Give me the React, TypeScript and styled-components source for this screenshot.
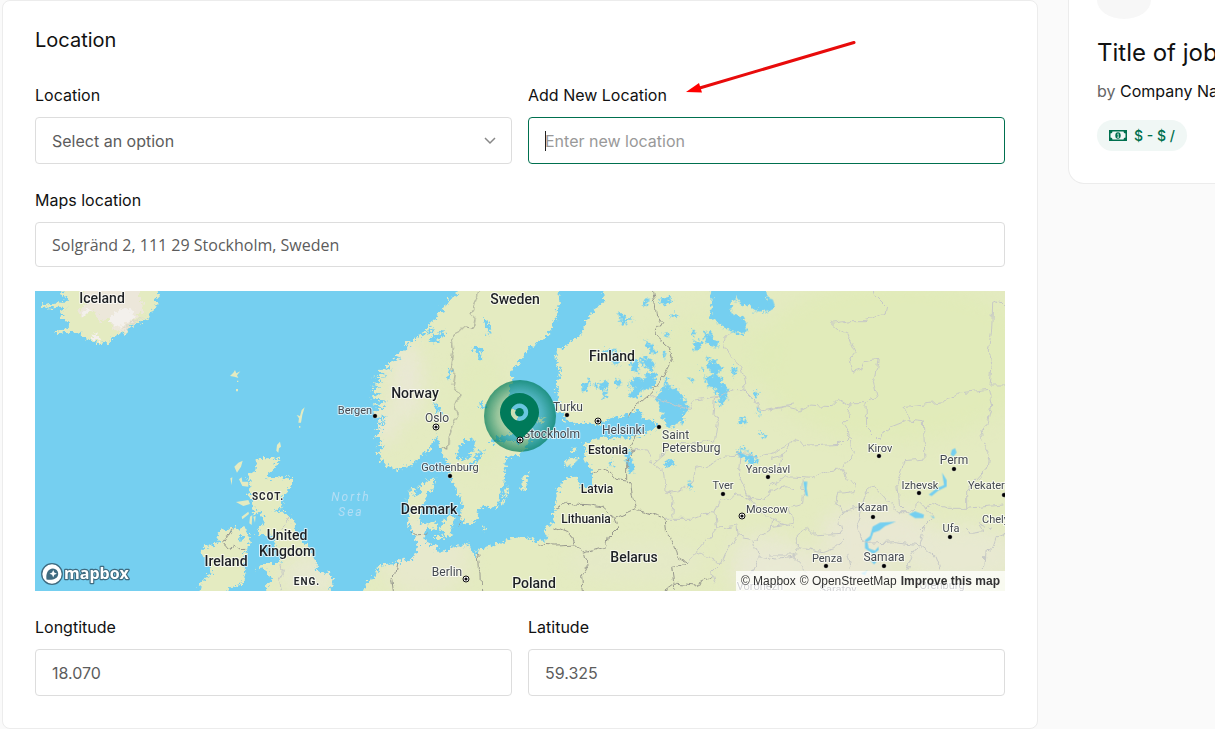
import React from "react";
import styled, { createGlobalStyle } from "styled-components";

const GlobalStyle = createGlobalStyle`
  *, *::before, *::after { box-sizing: border-box; }
  body {
    margin: 0;
    background: #fafafa;
    color: #111;
    font-family: Inter, "Liberation Sans", sans-serif;
    font-size: 16px;
    line-height: 24px;
  }
`;

const Page = styled.div`
  display: grid;
  grid-template-columns: minmax(0, 1fr) 147px;
  gap: 30px;
  align-items: start;
  padding-left: 2px;
`;

const Card = styled.section`
  background: #fff;
  border: 1px solid #ececec;
  border-radius: 8px;
  padding: 24px 32px 32px;
`;

const Heading = styled.h2`
  margin: 0 0 28px;
  font-size: 20px;
  line-height: 30px;
  font-weight: 400;
`;

const Form = styled.form`
  display: grid;
  grid-template-columns: repeat(2, minmax(0, 1fr));
  gap: 24px 16px;
`;

const Field = styled.div<{ $wide?: boolean }>`
  position: relative;
  display: flex;
  flex-direction: column;
  gap: 10px;
  grid-column: ${(p) => (p.$wide ? "1 / -1" : "auto")};
`;

const Label = styled.label`
  align-self: flex-start;
`;

const Control = styled.div<{ $caret?: boolean }>`
  position: relative;
  display: flex;
  &::after {
    content: "";
    display: ${(p) => (p.$caret ? "block" : "none")};
    position: absolute;
    left: 17px;
    top: 14px;
    width: 1px;
    height: 20px;
    background: #222;
  }
`;

const controlStyle = `
  width: 100%;
  padding: 0 16px;
  background: #fff;
  color: #5c5c5c;
  border-radius: 4px;
  outline: none;
  font-size: 16px;
`;

const Input = styled.input<{ $active?: boolean; $open?: boolean }>`
  ${controlStyle}
  height: ${(p) => (p.$open ? 45 : 47)}px;
  border: 1px solid ${(p) => (p.$active ? "#00704f" : "#ddd")};
  font-family: ${(p) => (p.$open ? '"Open Sans", sans-serif' : "Inter, sans-serif")};
  &::placeholder { color: #999; opacity: 1; }
`;

const Select = styled.select`
  ${controlStyle}
  height: 47px;
  border: 1px solid #ddd;
  font-family: Inter, sans-serif;
  appearance: none;
`;

const Chevron = styled.svg`
  position: absolute;
  right: 16px;
  top: 18px;
  pointer-events: none;
`;

const Arrow = styled.svg`
  position: absolute;
  left: 158px;
  top: -43px;
  pointer-events: none;
`;

const MapBox = styled.div`
  position: relative;
  grid-column: 1 / -1;
  height: 300px;
  overflow: hidden;
  background: #75cff0;
`;

const MapSvg = styled.svg`
  display: block;
  width: 100%;
  height: 100%;
  font-family: Roboto, sans-serif;
`;

const MapLogo = styled.a`
  position: absolute;
  left: 5px;
  bottom: 4px;
  display: block;
  height: 25px;
`;

const Attribution = styled.div`
  position: absolute;
  right: 0;
  bottom: 0;
  display: flex;
  gap: 4px;
  padding: 0 5px;
  background: rgba(255, 255, 255, 0.75);
  font-family: "Liberation Sans", Arial, sans-serif;
  font-size: 12px;
  line-height: 20px;
  white-space: nowrap;
`;

const AttributionLink = styled.a<{ $bold?: boolean }>`
  color: #333;
  text-decoration: none;
  font-weight: ${(p) => (p.$bold ? 700 : 400)};
`;

const Aside = styled.aside`
  overflow: hidden;
`;

const JobCard = styled.div`
  width: 340px;
  padding: 0 28px 32px;
  background: #fff;
  border: 1px solid #ececec;
  border-top: 0;
  border-radius: 0 0 16px 16px;
`;

const JobLogo = styled.div`
  width: 54px;
  height: 19px;
  background: #f7f7f7;
  border-radius: 0 0 27px 27px / 0 0 19px 19px;
`;

const JobTitle = styled.h3`
  margin: 18px 0 10px;
  font-size: 24px;
  line-height: 32px;
  font-weight: 400;
`;

const Company = styled.p`
  margin: 0 0 17px;
  color: #666;
`;

const CompanyLink = styled.a`
  color: #111;
  text-decoration: none;
`;

const Salary = styled.span`
  display: inline-flex;
  align-items: center;
  gap: 7px;
  height: 31px;
  padding: 0 12px;
  border-radius: 16px;
  background: #f0f7f5;
  color: #00704f;
  font-size: 14px;
  font-weight: 500;
  vertical-align: top;
`;

/* Geography is drawn in tiles at three units per map pixel. */
const tile = (x: number) => `scale(0.333333) translate(${x} -3)`;
const WEST = tile(0);
const NORDIC = tile(900);
const BALTIC = tile(1560);
const EAST = tile(2205);

const LAND = "#e4ebc1";
const WATER = "#75cff0";

const MAINLAND =
  "M145,3 148,40 130,45 110,70 95,95 85,110 78,135 50,150 30,175 5,180 5,215 15,250 5,290 8,320 14,345 0,362 28,372 25,390 60,400 90,398 110,405 135,400 170,385 215,375 258,360 260,385 285,390 300,395 312,410 290,420 270,432 240,440 200,445 150,440 110,450 85,460 95,480 85,500 90,520 110,530 112,590 80,590 65,560 40,562 20,580 5,610 0,650 -5,700 -25,710 -30,730 -20,745 -50,755 -90,740 -130,745 -180,765 -230,780 -235,800 -245,790 -250,775 -270,765 -295,770 -315,775 -330,785 -360,785 -355,770 -385,755 -390,735 -385,705 -405,700 -410,680 -400,650 -385,635 -390,610 -368,600 -362,565 -380,570 -410,590 -435,600 -445,630 -435,660 -440,690 -430,725 -420,740 -410,780 -420,800 -445,815 -450,805 -480,820 -505,822 -530,830 -540,860 -565,875 -585,925 1400,925 1400,-20 145,-20Z";

const SCANDINAVIA =
  "M372,-20 368,3 360,20 335,28 345,40 320,50 325,62 305,72 310,85 285,95 290,108 270,118 275,130 245,138 250,150 230,150 205,165 228,168 200,185 175,200 195,208 165,215 150,230 175,238 130,240 155,255 115,260 145,272 110,285 140,290 108,300 138,312 105,325 160,332 108,345 150,352 112,365 118,385 160,376 125,400 155,395 118,418 145,420 120,440 140,450 128,470 150,465 130,490 140,515 160,530 195,538 230,525 265,490 285,480 290,462 300,450 305,435 312,460 318,480 330,500 340,530 345,560 355,575 365,600 375,625 385,650 375,680 385,700 420,698 430,680 425,660 445,653 480,655 490,640 495,610 505,580 508,545 512,525 510,505 540,500 560,485 580,465 590,440 578,420 560,400 540,370 525,335 522,300 532,270 528,240 545,225 560,205 580,175 605,160 640,130 650,120 655,95 670,75 665,60 675,40 670,20 675,-20Z";

const BRITAIN =
  "M665,503 700,505 730,502 728,520 705,545 695,568 730,562 775,562 772,585 750,610 735,640 745,645 740,655 715,665 745,665 770,685 780,710 785,740 815,765 828,790 845,820 845,845 870,847 893,855 893,875 880,925 695,925 693,890 710,870 700,850 690,835 665,838 680,822 735,822 740,800 720,790 725,760 715,745 720,725 700,735 670,735 670,715 690,700 680,675 670,665 655,670 650,650 655,630 640,610 650,590 640,570 645,550 660,545 665,520Z";

const IRELAND =
  "M485,925 500,875 525,860 510,855 535,845 520,825 505,800 500,785 505,768 540,765 555,750 545,735 560,718 580,722 595,710 610,720 630,712 640,735 645,750 635,775 628,800 630,830 628,860 620,885 590,890 560,925Z";

const ICELAND =
  "M85,-20 85,3 75,15 100,22 98,30 75,40 50,42 22,46 22,54 50,52 80,50 95,55 75,62 90,75 75,78 88,90 105,95 100,112 85,120 66,120 68,129 110,125 135,130 150,148 175,155 195,162 220,158 232,140 270,130 290,108 335,90 355,60 365,45 358,30 372,15 368,-20Z";

const WEST_ISLES =
  "M585,258 595,248 600,240 604,250 616,244 606,256 610,264 598,260Z M603,297h6v7h-6Z M606,272h4v4h-4Z M785,375 795,378 800,360 809,352 802,375 798,398 790,398 792,385Z M792,408h4v5h-4Z M726,465 735,455 738,470 732,475 730,488 724,482Z M598,530 610,518 623,512 618,530 606,548Z M586,565 592,562 590,586Z M612,568 620,562 622,575 640,575 640,590 622,588Z M603,636 640,630 645,642 625,648Z M620,680 640,665 642,672 622,688Z M645,680 652,675 650,705 643,700Z M655,680 662,678 660,698Z";

const NORDIC_ISLES =
  "M318,702 335,690 340,680 362,685 355,700 345,715 350,735 330,742 315,720Z M275,700 290,692 305,700 300,718 285,722Z M300,738 330,738 325,750 300,748Z M442,712 452,714 450,724 443,722Z M385,758 400,754 402,766 388,768Z M558,600 566,560 580,548 578,575 566,603Z M498,645 510,600 520,585 518,600 503,648Z M602,395 612,382 630,390 620,402Z M690,518 700,505 728,503 722,520 692,528Z M706,480 718,475 722,488 708,490Z";

const SWEDEN_LAKES =
  "M365,490 375,465 390,450 418,448 420,470 412,490 398,505 380,510 365,505Z M395,535 415,510 430,485 450,480 432,510 400,540Z M445,88 455,88 462,110 470,130 462,135 455,115Z M415,170 428,168 440,180 438,208 430,208 430,188 415,182Z M342,235 350,240 346,270 336,265Z M295,335 310,345 322,370 315,375 300,355Z M432,335 452,348 450,355 435,352Z M465,452 500,436 530,432 565,442 560,458 520,452 490,456 470,460Z M280,152 300,138 330,120 328,130 300,160Z M276,125 300,115 300,122 280,135Z M555,300 560,290 562,330 556,325Z";

const FINLAND_LAKES =
  "M190,70 205,72 208,82 235,85 215,98 200,105Z M262,40 275,28 285,25 280,42 268,48Z M312,28 345,20 358,32 340,38 322,44Z M345,76 365,70 375,78 352,84Z M326,128 340,126 342,140 328,142Z M268,150 290,160 305,190 300,195 280,175Z M322,185 334,192 330,205 320,196Z M168,205 190,205 192,222 175,222Z M135,180 165,182 195,184 190,190 140,190Z M82,285 100,268 105,275 92,305 84,305Z M110,285 128,275 130,290 112,290Z M135,280 155,270 158,290 150,298 158,320 145,325 140,300Z M178,270 195,265 198,285 185,288Z M222,215 240,212 260,222 245,232 255,250 235,245Z M250,200 285,205 298,220 295,240 275,232 262,222Z M215,290 230,270 245,262 265,265 280,250 300,248 306,275 285,295 262,300 250,320 228,328 222,310 240,290Z M328,260 340,268 338,285 326,280Z M400,265 418,268 412,278Z M415,155 440,150 438,180 420,182Z M445,130 460,125 475,140 490,165 480,172 455,160Z M408,125 422,122 424,135 410,136Z M530,232 545,232 540,255 530,250Z M435,230 448,235 445,245Z M300,322 318,300 328,283 350,290 365,300 390,330 402,360 385,370 385,395 350,412 335,410 320,375 310,340Z M455,200 480,215 502,235 490,250 505,280 520,300 515,330 500,345 485,340 495,325 480,300 455,285 448,260 475,255 460,235Z M455,-20 470,20 468,60 465,85 490,100 520,120 545,130 565,130 578,120 570,90 555,80 530,70 525,40 545,25 560,50 580,40 600,65 620,60 630,70 655,50 640,30 630,-20Z M595,310 608,302 606,325 596,324Z M550,390 562,382 576,392 572,404 552,404Z M608,352 618,360 612,380Z M610,418 635,440 632,446 612,426Z M332,515 350,508 362,520 345,532 330,528Z M398,575 412,580 414,600 402,590Z M545,485 568,470 585,490 605,500 605,520 590,525 570,508 555,500Z M205,478 222,480 232,500 238,545 225,548 215,520Z M165,512h7v18h-9Z M540,495 555,488 560,498Z";

const EAST_LAKES =
  "M-5,25 8,28 14,45 5,58 -10,62Z M100,575 112,575 110,595 114,620 106,615Z M545,480 555,474 560,488 550,500 542,494Z M516,548 530,570 530,590 505,602 485,618 476,614 500,595 522,585Z M416,672 435,664 462,674 460,684 435,684Z M308,710 330,698 378,695 345,708 328,722 310,728 302,750 292,755 296,775 315,782 325,770 326,780 310,792 285,775 285,750 300,738Z M300,810 320,815 312,823Z M272,850 292,842 285,856Z M480,676 495,682 490,685Z";

const COUNTRY_BORDERS = [
  { at: NORDIC, d: "M435,-10 428,20 405,70 420,85 415,115 385,110 360,135 350,150 355,180 348,215 358,250 352,285 375,315 362,345 368,380 355,410 340,440 338,478 325,470 312,478" },
  { at: NORDIC, d: "M225,722 235,735 278,732" },
  { at: NORDIC, d: "M425,785 430,835 438,855 440,903" },
  { at: NORDIC, d: "M186,820 180,850 170,865 175,903" },
  { at: NORDIC, d: "M370,672 380,690 372,708" },
  { at: BALTIC, d: "M290,-10 300,45 305,80 320,100 300,135 345,175 355,205 335,245 290,310 240,350 220,385" },
  { at: BALTIC, d: "M240,440 225,465 235,478 215,520 215,572 228,590 232,620 242,655" },
  { at: BALTIC, d: "M110,550 135,535 165,545 180,565 215,570" },
  { at: BALTIC, d: "M0,655 35,640 110,645 140,650 180,685 242,657 270,665 330,685 335,730 360,770 368,800 395,815" },
  { at: BALTIC, d: "M180,685 190,710 160,740 155,770 120,780 85,790 65,762 0,765 -50,762" },
  { at: BALTIC, d: "M-5,708 40,725 58,760 M85,790 95,830 80,860 85,903" },
  { at: BALTIC, d: "M395,815 375,830 350,835 355,870 360,900 M330,905 365,880 420,885 470,860" },
  { at: WEST, d: "M595,712 580,740 565,760 580,778 600,762 615,780 625,778" },
];

const REGION_BORDERS = [
  { at: WEST, d: "M765,680 755,705 740,722 M735,825 745,850 732,875 738,905" },
  { at: BALTIC, d: "M525,130 505,150 520,195 555,225 568,270 570,300 600,330 615,360 720,345" },
  { at: BALTIC, d: "M570,300 535,298 485,320 420,330 402,358 280,318" },
  { at: BALTIC, d: "M485,320 480,370 490,400 482,450 410,462 370,460 330,490 295,520 275,480 232,478" },
  { at: BALTIC, d: "M295,520 325,545 330,600 355,620 350,680 M330,685 410,685 450,670 480,672 490,640 545,612 585,625 550,555 555,500 510,498 470,525 425,535 415,575 375,605 335,610" },
  { at: BALTIC, d: "M545,488 610,500 650,490 690,470 720,450 M585,625 625,630 640,605 690,590 720,600" },
  { at: BALTIC, d: "M480,672 485,715 460,745 430,780 395,815 M485,715 545,705 550,740 595,750 610,800 660,810 720,800 M550,740 515,785 500,820 460,800 425,785" },
  { at: BALTIC, d: "M585,625 610,660 650,690 645,720 600,750 M650,690 720,715 M500,820 470,850 480,880 M610,800 590,850" },
  { at: EAST, d: "M305,-10 315,15 350,50 345,70 310,85 285,92 240,92 185,100 205,118 230,130 255,185 240,205 248,250 275,240 285,215 325,208 310,280 320,320 288,335 245,335 235,345 205,325 180,350 120,345 90,360 45,350 0,360" },
  { at: EAST, d: "M240,340 235,395 215,395 240,435 245,480 255,490 215,535 165,545 130,565 50,560 0,590" },
  { at: EAST, d: "M288,335 290,410 330,450 335,430 365,410 415,390 460,395 465,510 405,515 380,575 385,640 405,660" },
  { at: EAST, d: "M415,390 402,350 440,345 520,335 560,310 655,298 665,345 650,410 628,440 660,490 655,530 590,605 590,655 700,645" },
  { at: EAST, d: "M705,45 690,30 668,40 665,120 655,180 665,240 660,285 705,285" },
  { at: EAST, d: "M0,505 40,495 70,455 120,465 215,460 240,435 M0,555 30,540 35,500 M100,570 95,640 60,650 70,700 0,710" },
  { at: EAST, d: "M215,535 230,570 260,575 255,605 205,610 195,640 220,660 275,650 290,600 310,585 350,630 385,665 420,665 445,635 465,655 490,640 530,655 590,655" },
  { at: EAST, d: "M220,660 205,690 215,730 130,735 110,715 85,730 85,770 160,785 200,770 225,750 M275,660 260,700 270,740 295,760 375,755 450,765 465,705 490,680 465,655" },
  { at: EAST, d: "M450,765 425,800 410,840 M450,765 495,800 510,840 M465,705 450,720 M705,730 680,740 670,770 645,790 640,840 M585,715 605,730 640,725 625,700 660,715" },
  { at: EAST, d: "M85,770 70,800 110,840 M230,790 240,830 M0,795 85,795" },
];

type PlaceKind = "country" | "small" | "city" | "town";
type Place = { x: number; y: number; name: string; kind: PlaceKind; start?: boolean };

const PLACES: Place[] = [
  { x: 67, y: 12, name: "Iceland", kind: "country" },
  { x: 480, y: 13, name: "Sweden", kind: "country" },
  { x: 577, y: 70, name: "Finland", kind: "country" },
  { x: 380, y: 107, name: "Norway", kind: "country" },
  { x: 394, y: 223, name: "Denmark", kind: "country" },
  { x: 252, y: 249, name: "United", kind: "country" },
  { x: 252, y: 265, name: "Kingdom", kind: "country" },
  { x: 191, y: 275, name: "Ireland", kind: "country" },
  { x: 599, y: 271, name: "Belarus", kind: "country" },
  { x: 499, y: 297, name: "Poland", kind: "country" },
  { x: 573, y: 163, name: "Estonia", kind: "small" },
  { x: 562, y: 202, name: "Latvia", kind: "small" },
  { x: 551, y: 232, name: "Lithuania", kind: "small" },
  { x: 320, y: 123, name: "Bergen", kind: "town" },
  { x: 402, y: 131, name: "Oslo", kind: "city" },
  { x: 415, y: 180, name: "Gothenburg", kind: "town" },
  { x: 533, y: 120, name: "Turku", kind: "city" },
  { x: 567, y: 143, name: "Helsinki", kind: "city", start: true },
  { x: 627, y: 148, name: "Saint", kind: "city", start: true },
  { x: 627, y: 161, name: "Petersburg", kind: "city", start: true },
  { x: 412, y: 285, name: "Berlin", kind: "city" },
  { x: 688, y: 198, name: "Tver", kind: "town" },
  { x: 733, y: 182, name: "Yaroslavl", kind: "town" },
  { x: 711, y: 222, name: "Moscow", kind: "town", start: true },
  { x: 845, y: 161, name: "Kirov", kind: "town" },
  { x: 919, y: 173, name: "Perm", kind: "city" },
  { x: 885, y: 198, name: "Izhevsk", kind: "town" },
  { x: 933, y: 198, name: "Yekaterinburg", kind: "town", start: true },
  { x: 838, y: 220, name: "Kazan", kind: "town" },
  { x: 947, y: 232, name: "Chelyabinsk", kind: "town", start: true },
  { x: 916, y: 241, name: "Ufa", kind: "town" },
  { x: 792, y: 271, name: "Penza", kind: "town" },
  { x: 849, y: 270, name: "Samara", kind: "city" },
  { x: 725, y: 299, name: "Voronezh", kind: "town" },
  { x: 803, y: 302, name: "Saratov", kind: "town" },
  { x: 907, y: 298, name: "Orenburg", kind: "town" },
];

const CITY_DOTS = [
  [340, 125], [415, 185], [532, 124], [624, 136], [688, 203], [733, 186], [844, 165],
  [919, 178], [884, 202], [969, 204], [838, 226], [915, 246], [791, 275], [849, 275],
];

const CAPITAL_DOTS = [[401, 136], [563, 130], [431, 288], [707, 225]];

const placeSize: Record<PlaceKind, number> = { country: 14, small: 12, city: 12, town: 11 };
const isTown = (kind: PlaceKind) => kind === "city" || kind === "town";

const PlaceName = styled.text<{ $kind: PlaceKind; $start?: boolean }>`
  font-size: ${(p) => placeSize[p.$kind]}px;
  font-weight: ${(p) => (isTown(p.$kind) ? 400 : 500)};
  fill: ${(p) => (isTown(p.$kind) ? "#444950" : "#1d2024")};
  text-anchor: ${(p) => (p.$start ? "start" : "middle")};
  stroke: rgba(255, 255, 255, 0.7);
  stroke-width: 2px;
  stroke-linejoin: round;
  paint-order: stroke;
`;

const RegionName = styled.text`
  font-size: 10px;
  font-weight: 700;
  letter-spacing: 1px;
  fill: #26292d;
  text-anchor: middle;
  stroke: rgba(255, 255, 255, 0.7);
  stroke-width: 2px;
  paint-order: stroke;
`;

const SeaName = styled.text`
  font-size: 12px;
  font-style: italic;
  letter-spacing: 2px;
  fill: #b4def4;
  text-anchor: middle;
`;

const Capital = ({ x, y }: { x: number; y: number }) => (
  <g>
    <circle cx={x} cy={y} r="3" fill="#fff" stroke="#111" strokeWidth="1" />
    <circle cx={x} cy={y} r="1.6" fill="#111" />
  </g>
);

const WorldMap = () => (
  <MapSvg viewBox="0 0 970 300" preserveAspectRatio="xMidYMid slice" role="img" aria-label="Map of northern Europe">
    <defs>
      <filter id="coast" filterUnits="userSpaceOnUse" x="-10" y="-10" width="990" height="320" colorInterpolationFilters="sRGB">
        <feTurbulence type="fractalNoise" baseFrequency="0.28" numOctaves="3" seed="4" result="n" />
        <feDisplacementMap in="SourceGraphic" in2="n" scale="10" xChannelSelector="R" yChannelSelector="G" />
      </filter>
      <filter id="border" filterUnits="userSpaceOnUse" x="-10" y="-10" width="990" height="320" colorInterpolationFilters="sRGB">
        <feTurbulence type="fractalNoise" baseFrequency="0.12" numOctaves="2" seed="9" result="n" />
        <feDisplacementMap in="SourceGraphic" in2="n" scale="8" xChannelSelector="R" yChannelSelector="G" />
      </filter>
      <filter id="soft" x="-50%" y="-50%" width="200%" height="200%">
        <feGaussianBlur stdDeviation="9" />
      </filter>
      <radialGradient id="halo">
        <stop offset="0.3" stopColor="#007a5a" stopOpacity="0.1" />
        <stop offset="0.65" stopColor="#007a5a" stopOpacity="0.35" />
        <stop offset="1" stopColor="#007a5a" stopOpacity="0.72" />
      </radialGradient>
      <clipPath id="land">
        <path d={MAINLAND} transform={BALTIC} />
        <path d={SCANDINAVIA} transform={NORDIC} />
        <path d={BRITAIN} transform={WEST} />
      </clipPath>
    </defs>
    <rect width="970" height="300" fill={WATER} />
    <g filter="url(#coast)">
      <g fill={LAND}>
        <path d={MAINLAND} transform={BALTIC} />
        <path d={SCANDINAVIA} transform={NORDIC} />
        <path d={NORDIC_ISLES} transform={NORDIC} />
        <path d={BRITAIN} transform={WEST} />
        <path d={IRELAND} transform={WEST} />
        <path d={ICELAND} transform={WEST} />
      </g>
      <g clipPath="url(#land)">
        <g fill="#e9e8d4" filter="url(#soft)">
          <ellipse cx="780" cy="285" rx="85" ry="26" opacity="0.9" />
          <ellipse cx="840" cy="240" rx="55" ry="26" opacity="0.9" />
          <ellipse cx="730" cy="265" rx="35" ry="22" opacity="0.8" />
          <ellipse cx="925" cy="265" rx="60" ry="30" opacity="0.8" />
          <ellipse cx="390" cy="265" rx="45" ry="40" opacity="0.6" />
          <ellipse cx="275" cy="285" rx="28" ry="22" opacity="0.8" />
          <ellipse cx="372" cy="90" rx="15" ry="40" />
          <ellipse cx="352" cy="135" rx="10" ry="18" />
          <ellipse cx="600" cy="270" rx="70" ry="20" opacity="0.3" />
        </g>
        <g fill="#e0ebb8" filter="url(#soft)">
          <ellipse cx="860" cy="70" rx="140" ry="80" opacity="0.8" />
          <ellipse cx="680" cy="60" rx="60" ry="40" opacity="0.5" />
          <ellipse cx="445" cy="120" rx="25" ry="60" opacity="0.5" />
        </g>
      </g>
      <g transform={WEST}>
        <path d="M135,10 160,-10 310,-10 325,60 300,85 265,130 235,120 225,85 190,95 180,60 140,80 130,60 155,45Z" fill="#ece7da" />
        <path d="M225,80 260,55 300,60 290,90 255,110 225,100Z M165,140 180,130 200,145 185,152Z M140,65 155,50 162,65 148,80Z" fill="#f3f0ec" />
        <path d="M255,122 290,95 335,75 300,100Z" fill="#dddacd" />
        <path d="M612,738 625,738 628,752 614,754Z" fill={WATER} />
      </g>
      <g fill={WATER}>
        <path d={SWEDEN_LAKES} transform={NORDIC} />
        <path d={FINLAND_LAKES} transform={BALTIC} />
        <path d="M245,590 258,600 255,620 235,612Z M270,650 285,655 280,670Z" transform={NORDIC} />
      </g>
    </g>
    <g fill={LAND}>
      <path d={WEST_ISLES} transform={WEST} />
      <path d="M530,500 545,496 542,508Z M555,478 572,480 585,492 578,498 562,490Z M30,520 45,505 70,508 60,518 35,528Z" transform={BALTIC} />
    </g>
    <path d={EAST_LAKES} transform={EAST} fill={WATER} />
    <g fill="none" strokeLinejoin="round" filter="url(#border)">
      {REGION_BORDERS.map((b) => (
        <path key={b.d} d={b.d} transform={b.at} stroke="#c6c8c6" strokeWidth="3" />
      ))}
      {COUNTRY_BORDERS.map((b) => (
        <path key={b.d} d={b.d} transform={b.at} stroke="#98998f" strokeWidth="3" />
      ))}
    </g>

    {PLACES.map((p) => (
      <PlaceName key={p.name} x={p.x} y={p.y} $kind={p.kind} $start={p.start}>
        {p.name}
      </PlaceName>
    ))}
    <RegionName x="233" y="209">SCOT.</RegionName>
    <RegionName x="272" y="294">ENG.</RegionName>
    <SeaName x="316" y="210">North</SeaName>
    <SeaName x="316" y="225">Sea</SeaName>
    {CITY_DOTS.map(([x, y]) => (
      <circle key={`${x}-${y}`} cx={x} cy={y} r="2.3" fill="#000" stroke="#fff" strokeOpacity="0.6" strokeWidth="0.6" />
    ))}
    {CAPITAL_DOTS.map(([x, y]) => (
      <Capital key={`${x}-${y}`} x={x} y={y} />
    ))}
    <circle cx="485" cy="125" r="36" fill="url(#halo)" />
    <PlaceName x={488} y={147} $kind="city" $start>
      Stockholm
    </PlaceName>
    <path
      fillRule="evenodd"
      fill="#007a5a"
      d="M485 150C479 142 465 134 465 121.500A19.500 19.500 0 0 1 504 121.500C504 134 491 142 485 150ZM484.500 112.500a8.700 8.700 0 1 0 0.010 0Z"
    />
    <circle cx="484.500" cy="121.200" r="4.300" fill="#007a5a" />
    <Capital x={485} y={149} />
  </MapSvg>
);

const MapboxLogo = () => (
  <svg width="92" height="25" viewBox="0 0 92 25" aria-label="Mapbox">
    <circle cx="12" cy="12" r="10.300" fill="#fff" stroke="#3f6b80" strokeWidth="1.300" />
    <path d="M6.500 17.500C5.500 11.500 8 6.500 13 6.500a5.200 5.200 0 0 1 5.200 5.200C18.200 16.500 12.500 18.500 6.500 17.500Z" fill="#3f6b80" />
    <path d="M13.200 8l1.100 2.600 2.600 1.100-2.600 1.100-1.100 2.600-1.100-2.600-2.600-1.100 2.600-1.100Z" fill="#fff" />
    <text
      x="24"
      y="17"
      fontFamily="Open Sans, sans-serif"
      fontSize="16"
      fontWeight="700"
      fill="#fff"
      stroke="#3f6b80"
      strokeWidth="2.400"
      strokeLinejoin="round"
      paintOrder="stroke"
    >
      mapbox
    </text>
  </svg>
);

const MoneyIcon = () => (
  <svg width="18" height="11" viewBox="0 0 18 11" aria-hidden="true">
    <path
      fillRule="evenodd"
      fill="currentColor"
      d="M0 0H18V11H0ZM3.500 1.500A2 2 0 0 1 1.500 3.500V7.500A2 2 0 0 1 3.500 9.500H14.500A2 2 0 0 1 16.500 7.500V3.500A2 2 0 0 1 14.500 1.500Z"
    />
    <ellipse cx="9" cy="5.500" rx="2.700" ry="3.200" fill="currentColor" />
    <path d="M8.300 4.300L9.200 3.700V7.300M8.200 7.300H10.100" fill="none" stroke="#f0f7f5" strokeWidth="0.800" />
  </svg>
);

export default function App() {
  return (
    <>
      <GlobalStyle />
      <Page>
        <Card>
          <Heading>Location</Heading>
          <Form>
            <Field>
              <Label htmlFor="location">Location</Label>
              <Control>
                <Select id="location" defaultValue="">
                  <option value="">Select an option</option>
                </Select>
                <Chevron width="12" height="12" viewBox="0 0 12 12" aria-hidden="true">
                  <path d="M1 3l5 5 5-5" fill="none" stroke="#888" strokeWidth="1.500" />
                </Chevron>
              </Control>
            </Field>
            <Field>
              <Label htmlFor="new-location">Add New Location</Label>
              <Control $caret>
                <Input id="new-location" type="text" placeholder="Enter new location" $active />
              </Control>
              <Arrow width="172" height="56" viewBox="0 0 172 56" aria-hidden="true">
                <path d="M168 2.500L12 48.500" stroke="#e80b0b" strokeWidth="3" strokeLinecap="round" />
                <path d="M0 52L13 43L16 52.500Z" fill="#f00" />
              </Arrow>
            </Field>
            <Field $wide>
              <Label htmlFor="maps-location">Maps location</Label>
              <Control>
                <Input id="maps-location" type="text" defaultValue="Solgränd 2, 111 29 Stockholm, Sweden" $open />
              </Control>
            </Field>
            <MapBox>
              <WorldMap />
              <MapLogo href="#mapbox">
                <MapboxLogo />
              </MapLogo>
              <Attribution>
                <AttributionLink href="#mapbox">© Mapbox</AttributionLink>
                <AttributionLink href="#osm">© OpenStreetMap</AttributionLink>
                <AttributionLink href="#improve" $bold>
                  Improve this map
                </AttributionLink>
              </Attribution>
            </MapBox>
            <Field>
              <Label htmlFor="longitude">Longtitude</Label>
              <Control>
                <Input id="longitude" type="text" defaultValue="18.070" />
              </Control>
            </Field>
            <Field>
              <Label htmlFor="latitude">Latitude</Label>
              <Control>
                <Input id="latitude" type="text" defaultValue="59.325" />
              </Control>
            </Field>
          </Form>
        </Card>
        <Aside>
          <JobCard>
            <JobLogo />
            <JobTitle>Title of job</JobTitle>
            <Company>
              by <CompanyLink href="#company">Company Name</CompanyLink>
            </Company>
            <Salary>
              <MoneyIcon />$ - $ /
            </Salary>
          </JobCard>
        </Aside>
      </Page>
    </>
  );
}
